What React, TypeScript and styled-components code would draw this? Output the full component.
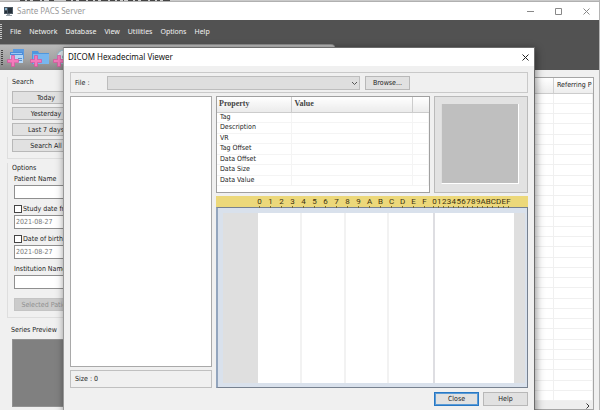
import React from "react";
import styled, { createGlobalStyle } from "styled-components";

const ui = `"DejaVu Sans Condensed", "Liberation Sans", sans-serif`;
const system = `"Noto Sans", "Open Sans", sans-serif`;

const GlobalStyle = createGlobalStyle`
  * { box-sizing: border-box; }
  body { margin: 0; overflow: hidden; background: #f0f0f0; font: 7px/10px ${ui}; color: #1c1c1c; }
  button, input, select { font: inherit; color: inherit; margin: 0; border-radius: 0; min-width: 0; }
`;

const AppWindow = styled.div`
  position: relative;
  display: flex;
  flex-direction: column;
  height: 100vh;
  overflow: hidden;
  border-right: 1px solid #b4b4b4;
`;

const Backdrop = styled.svg`
  display: block;
  flex: none;
  width: 100%;
  height: 2px;
  background: #b0b0b0;
`;

const TitleBar = styled.header`
  display: flex;
  align-items: center;
  flex: none;
  gap: 4px;
  height: 18px;
  padding: 0 8px 0 4px;
  background: #fff;
  color: #999;
  font: 8px/12px ${system};
`;

const Title = styled.h1`
  flex: 1;
  margin: 0;
  font: inherit;
`;

const WindowControls = styled.div`
  display: flex;
  gap: 18px;
`;

const GlyphButton = styled.button`
  display: grid;
  place-items: center;
  width: 10px;
  height: 12px;
  padding: 0;
  border: 0;
  background: none;
  color: ${(p) => p.color || "#888"};
`;

const Ribbon = styled.div`
  flex: none;
  background: #525252;
`;

const MenuBar = styled.nav`
  display: flex;
  align-items: center;
  gap: 8px;
  height: 24px;
  color: #f2f2f2;
`;

const MenuItem = styled.button`
  padding: 0;
  border: 0;
  background: none;
  font: 7px/10px ${system};
`;

const Grip = styled.span<{ $tone: string }>`
  width: 2px;
  height: 16px;
  background: repeating-linear-gradient(${(p) => p.$tone} 0 1px, transparent 1px 2px);
`;

const ToolBar = styled.div`
  display: flex;
  align-items: center;
  gap: 4px;
  width: 335px;
  height: 26px;
  padding-left: 1px;
  border-radius: 0 4px 4px 0;
  border-top: 1px solid #8b8b8b;
  background: linear-gradient(#b9b9b9, #a4a4a4 55%, #858585);
`;

const ToolButton = styled.button`
  padding: 0;
  border: 0;
  background: none;
  height: 20px;
`;

const Workspace = styled.main`
  display: flex;
  flex: 1;
  min-height: 0;
  padding: 7px 5px 0 7px;
  background: #f0f0f0;
`;

const SidePanel = styled.aside`
  width: 80px;
  flex: none;
`;

const Group = styled.section`
  border: 1px solid #dedede;
  border-top: 0;
  padding: 0 6px 6px;
  & + & { margin-top: 4px; }
`;

const GroupTitle = styled.h2<{ $tight?: boolean }>`
  height: 10px;
  margin: 0 0 ${(p) => (p.$tight ? 1 : 4)}px -2px;
  font: inherit;
`;

const ButtonStack = styled.div`
  display: grid;
  gap: 3px;
  margin-left: -2px;
`;

const Button = styled.button<{ $primary?: boolean; $width?: number }>`
  width: ${(p) => (p.$width ? `${p.$width}px` : "auto")};
  height: ${(p) => (p.$width ? 14 : 13)}px;
  padding: 0;
  border: 1px solid #b8b8b8;
  ${(p) => p.$primary && "border: 1px solid #2878c4; outline: 1px solid #5a9bd6; outline-offset: -2px;"}
  background: #e1e1e1;
  line-height: 10px;
  white-space: nowrap;
  &:disabled { margin-top: 4px; background: #cbcbcb; border-color: #c4c4c4; color: #909090; }
`;

const Fields = styled.div`
  display: flex;
  flex-direction: column;
`;

const Field = styled.div`
  display: flex;
  flex-direction: column;
  gap: 1px;
  margin-bottom: 5px;
  white-space: nowrap;
`;

const CheckLabel = styled.label`
  display: flex;
  align-items: center;
  gap: 1px;
  height: 10px;
`;

const CheckBox = styled.input`
  appearance: none;
  width: 8px;
  height: 8px;
  border: 1px solid #444;
  background: #fff;
`;

const TextBox = styled.input`
  width: 100%;
  height: 14px;
  padding: 0 1px;
  border: 1px solid #8f8f8f;
  background: #fff;
  color: #777;
`;

const PreviewTitle = styled.h2`
  margin: 7px 0 4px 4px;
  font: inherit;
`;

const SeriesPreview = styled.div`
  height: 68px;
  margin-left: 5px;
  border: 1px solid #929292;
  background: #808080;
`;

const StudyList = styled.div`
  flex: 1;
  display: flex;
  flex-direction: column;
  border: 1px solid #a5a5a5;
  background: #fff;
`;

const StudyTable = styled.table`
  width: 100%;
  flex: 1;
  border-collapse: collapse;
  table-layout: fixed;
  th { height: 15px; padding: 0 0 0 3px; border-right: 1px solid #d0d0d0; border-bottom: 1px solid #ccc;
    background: linear-gradient(#fff, #ededed); font-weight: 400; text-align: left; white-space: nowrap; }
  th:last-child { width: 39px; border-right: 0; }
  td { padding: 0; border: 1px solid #f0f0f0; border-left: 0; }
`;

const ScrollFoot = styled.div`
  display: flex;
  justify-content: flex-end;
  height: 8px;
  padding: 2px 3px 0;
  background: #eee;
`;

const Dialog = styled.section`
  position: absolute;
  z-index: 1;
  top: 47px;
  left: 63px;
  right: 64px;
  bottom: -8px;
  display: flex;
  flex-direction: column;
  border: 1px solid #6c6c6c;
  border-left-color: #999;
  background: #f0f0f0;
  box-shadow: 1px 2px 8px rgba(0, 0, 0, 0.45);
`;

const DialogBar = styled.header`
  display: flex;
  align-items: center;
  justify-content: space-between;
  flex: none;
  height: 18px;
  padding: 0 4px;
  background: #fff;
`;

const DialogTitle = styled.h2`
  margin: 0;
  font: 8px/12px ${system};
  color: #111;
`;

const DialogBody = styled.div`
  flex: 1;
  min-height: 0;
  display: flex;
  flex-direction: column;
  gap: 3px;
  padding: 6px 6px 11px;
`;

const FileBar = styled.div`
  display: flex;
  align-items: center;
  gap: 5px;
  height: 21px;
  padding-left: 4px;
  border: 1px solid #c9c9c9;
`;

const FileLabel = styled.label`
  width: 27px;
`;

const SelectWrap = styled.span`
  position: relative;
  width: 253px;
  height: 14px;
  svg { position: absolute; right: 2px; top: 5px; pointer-events: none; }
`;

const Select = styled.select`
  display: block;
  appearance: none;
  width: 100%;
  height: 14px;
  padding: 0 4px;
  border: 1px solid #bdbdbd;
  background: #dedede;
`;

const Columns = styled.div`
  flex: 1;
  min-height: 0;
  display: grid;
  grid-template-columns: 142px 1fr;
  gap: 4px;
`;

const Column = styled.div`
  display: flex;
  flex-direction: column;
  gap: 3px;
  min-height: 0;
`;

const TagTree = styled.div`
  flex: 1;
  border: 1px solid #a9a9a9;
  background: #fff;
`;

const SizeBar = styled.output`
  height: 18px;
  padding: 3px 4px;
  border: 1px solid #c0c0c0;
`;

const TopPanes = styled.div`
  display: grid;
  grid-template-columns: 1fr 94px;
  gap: 4px;
  height: 97px;
`;

const PropertyPane = styled.div`
  border: 1px solid #a0a0a0;
  background: #fff;
`;

const PropertyTable = styled.table`
  width: 100%;
  height: 89px;
  border-collapse: collapse;
  table-layout: fixed;
  th { height: 15px; padding: 0 3px; text-align: left; font: bold 8px/10px "Liberation Serif", serif; color: #444;
    border-right: 1px solid #ccc; border-bottom: 1px solid #ccc; background: linear-gradient(#fff, #ebebeb); }
  th:first-child { width: 74px; padding-left: 2px; }
  th:last-child { width: 16px; border-right: 0; }
  td { padding: 0 3px; border: 1px solid #f4f4f4; border-left: 0; line-height: 9px; }
`;

const PreviewPane = styled.div`
  padding: 7px 8px 8px 6px;
  border: 1px solid #bababa;
  background: #e2e2e2;
`;

const PreviewImage = styled.div`
  height: 100%;
  border: 1px solid #fff;
  border-width: 0 1px 1px 0;
  border-left: 1px solid #ddd;
  background: #bfbfbf;
`;

const HexViewer = styled.div`
  flex: 1;
  min-height: 0;
  display: flex;
  flex-direction: column;
`;

const Ruler = styled.div`
  display: grid;
  grid-template-columns: 176px 79px;
  gap: 2px;
  height: 12px;
  padding-left: 38px;
  background: #ecd87a;
  color: #3c3210;
  font: 8px/9px "Roboto", sans-serif;
`;

const Scale = styled.div`
  display: grid;
  grid-template-columns: repeat(16, 1fr);
  text-align: center;
`;

const Mark = styled.span`
  position: relative;
  padding-top: 1px;
  &::after { content: ""; position: absolute; bottom: 0; left: calc(50% - 1px); width: 1px; height: 2px; background: #7b6c32; }
`;

const HexBody = styled.div`
  flex: 1;
  display: grid;
  grid-template-columns: 35px 177px 79px 1fr;
  padding: 5px 2px 4px 5px;
  border: 1px solid #77818f;
  border-left: 2px solid #93a5bd;
  background: #d9e1ec;
  margin-top: -1px;
`;

const Gutter = styled.div`
  background: #dfdfdf;
`;

const HexArea = styled.div`
  display: grid;
  grid-template-columns: repeat(4, 1fr);
  border-right: 2px solid #dedee2;
  background: #fff;
`;

const HexGroup = styled.div`
  border-right: 2px solid #f2f2f2;
  &:last-child { border-right: 0; }
`;

const AsciiArea = styled.div`
  background: #fff;
`;

const Actions = styled.footer`
  display: flex;
  justify-content: flex-end;
  gap: 4px;
  padding-top: 1px;
`;

const Cross = () => (
  <svg width="7" height="7" viewBox="0 0 7 7" stroke="currentColor" fill="none" aria-hidden="true">
    <path d="M.5 .5 6.5 6.5M6.5 .5.5 6.5" />
  </svg>
);

const AppLogo = () => (
  <svg width="9" height="9" viewBox="0 0 9 9" aria-hidden="true">
    <path fill="#4e5a64" d="M0 0h9v7H0z" />
    <path fill="#86b3d0" d="M1 1h2v2H1z" />
    <path fill="#26313a" d="M4 1h4v5H4zM1 4h2v2H1z" />
    <path fill="#9aa3aa" d="M3 7h3v1h2v1H2V8h1z" />
  </svg>
);

const Plus = () => (
  <path
    d="M4.5 7.5h3v4h4v3h-4v4h-3v-4h-4v-3h4z"
    fill="#f47abb"
    stroke="#d4559c"
    strokeWidth=".7"
    strokeLinejoin="round"
  />
);

const icons = [
  {
    name: "Add study",
    art: (
      <>
        <path d="M6 1h11v10H6z" fill="#5b9be0" />
        <path d="M3 4h13v11H3z" fill="#b4d6f6" />
        <path d="M3 4h13v3H3z" fill="#4d8dd8" />
        <path d="M4 5.5h11" stroke="#9cc8f2" />
        <path d="M11 10.5h4M11 12.5h4" stroke="#5a8fca" />
      </>
    ),
  },
  {
    name: "Add folder",
    art: (
      <>
        <path d="M2 3h6l1 2h10v11H2z" fill="#4f97de" />
        <path d="M3 6h16v10H3z" fill="#78b6ef" />
      </>
    ),
  },
  {
    name: "Add disc",
    art: (
      <>
        <circle cx="11" cy="9" r="7" fill="#d9e6ec" stroke="#8ab8cc" />
        <circle cx="11" cy="9" r="2" fill="#7fa4b5" />
      </>
    ),
  },
];

const menus = ["File", "Network", "Database", "View", "Utilities", "Options", "Help"];
const ranges = ["Today", "Yesterday", "Last 7 days", "Search All"];
const properties = ["Tag", "Description", "VR", "Tag Offset", "Data Offset", "Data Size", "Data Value"];
const digits = "0123456789ABCDEF".split("");
const studyRows = Array.from({ length: 30 }, (_, i) => i);

const HexScale = () => (
  <Scale>
    {digits.map((d) => (
      <Mark key={d}>{d}</Mark>
    ))}
  </Scale>
);

export default function App() {
  return (
    <>
      <GlobalStyle />
      <AppWindow>
        <Backdrop aria-hidden="true">
          <path d="M0 0H1000" stroke="#e4e4e4" />
          <path d="M20 .5H44M49 .5H55M66 .5H124M128 .5H170" stroke="#444" strokeDasharray="5 2 3 3 7 2" />
        </Backdrop>
        <TitleBar>
          <AppLogo />
          <Title>Sante PACS Server</Title>
          <WindowControls>
            <GlyphButton aria-label="Minimize">
              <svg width="7" height="7" stroke="currentColor"><path d="M0 3.5H7" /></svg>
            </GlyphButton>
            <GlyphButton aria-label="Maximize">
              <svg width="7" height="7" stroke="currentColor" fill="none"><path d="M.5 .5h6v6h-6z" /></svg>
            </GlyphButton>
            <GlyphButton aria-label="Close window"><Cross /></GlyphButton>
          </WindowControls>
        </TitleBar>
        <Ribbon>
          <MenuBar>
            <Grip $tone="#c8c8c8" />
            {menus.map((m) => (
              <MenuItem key={m}>{m}</MenuItem>
            ))}
          </MenuBar>
          <ToolBar>
            <Grip $tone="#444" />
            {icons.map((icon) => (
              <ToolButton key={icon.name} aria-label={icon.name}>
                <svg width="19" height="20" viewBox="0 0 19 20">
                  {icon.art}
                  <Plus />
                </svg>
              </ToolButton>
            ))}
          </ToolBar>
        </Ribbon>
        <Workspace>
          <SidePanel>
            <Group>
              <GroupTitle>Search</GroupTitle>
              <ButtonStack>
                {ranges.map((r) => (
                  <Button key={r}>{r}</Button>
                ))}
              </ButtonStack>
            </Group>
            <Group>
              <GroupTitle $tight>Options</GroupTitle>
              <Fields>
                <Field>
                  <label htmlFor="patient">Patient Name</label>
                  <TextBox id="patient" />
                </Field>
                <Field>
                  <CheckLabel><CheckBox type="checkbox" />Study date from</CheckLabel>
                  <TextBox aria-label="Study date" defaultValue="2021-08-27" />
                </Field>
                <Field>
                  <CheckLabel><CheckBox type="checkbox" />Date of birth</CheckLabel>
                  <TextBox aria-label="Birth date" defaultValue="2021-08-27" />
                </Field>
                <Field>
                  <label htmlFor="institution">Institution Name</label>
                  <TextBox id="institution" />
                </Field>
                <Button disabled>Selected Patient</Button>
              </Fields>
            </Group>
            <PreviewTitle>Series Preview</PreviewTitle>
            <SeriesPreview />
          </SidePanel>
          <StudyList>
            <StudyTable>
              <thead><tr><th /><th>Referring P</th></tr></thead>
              <tbody>
                {studyRows.map((r) => (
                  <tr key={r}><td /><td /></tr>
                ))}
              </tbody>
            </StudyTable>
            <ScrollFoot>
              <svg width="4" height="6" fill="none" stroke="#333"><path d="M.5 .5 3 3 .5 5.5" /></svg>
            </ScrollFoot>
          </StudyList>
        </Workspace>
        <Dialog role="dialog" aria-labelledby="dialog-title">
          <DialogBar>
            <DialogTitle id="dialog-title">DICOM Hexadecimal Viewer</DialogTitle>
            <GlyphButton color="#222" aria-label="Close dialog"><Cross /></GlyphButton>
          </DialogBar>
          <DialogBody>
            <FileBar>
              <FileLabel htmlFor="file">File :</FileLabel>
              <SelectWrap>
                <Select id="file"><option /></Select>
                <svg width="7" height="5" fill="none" stroke="#555"><path d="M1 1 3.5 3.5 6 1" /></svg>
              </SelectWrap>
              <Button $width={45}>Browse...</Button>
            </FileBar>
            <Columns>
              <Column>
                <TagTree />
                <SizeBar>Size : 0</SizeBar>
              </Column>
              <Column>
                <TopPanes>
                  <PropertyPane>
                    <PropertyTable>
                      <thead><tr><th>Property</th><th>Value</th><th /></tr></thead>
                      <tbody>
                        {properties.map((p) => (
                          <tr key={p}><td>{p}</td><td /><td /></tr>
                        ))}
                      </tbody>
                    </PropertyTable>
                  </PropertyPane>
                  <PreviewPane><PreviewImage /></PreviewPane>
                </TopPanes>
                <HexViewer>
                  <Ruler><HexScale /><HexScale /></Ruler>
                  <HexBody>
                    <Gutter />
                    <HexArea><HexGroup /><HexGroup /><HexGroup /><HexGroup /></HexArea>
                    <AsciiArea />
                    <Gutter />
                  </HexBody>
                </HexViewer>
              </Column>
            </Columns>
            <Actions>
              <Button $width={45} $primary>Close</Button>
              <Button $width={45}>Help</Button>
            </Actions>
          </DialogBody>
        </Dialog>
      </AppWindow>
    </>
  );
}
